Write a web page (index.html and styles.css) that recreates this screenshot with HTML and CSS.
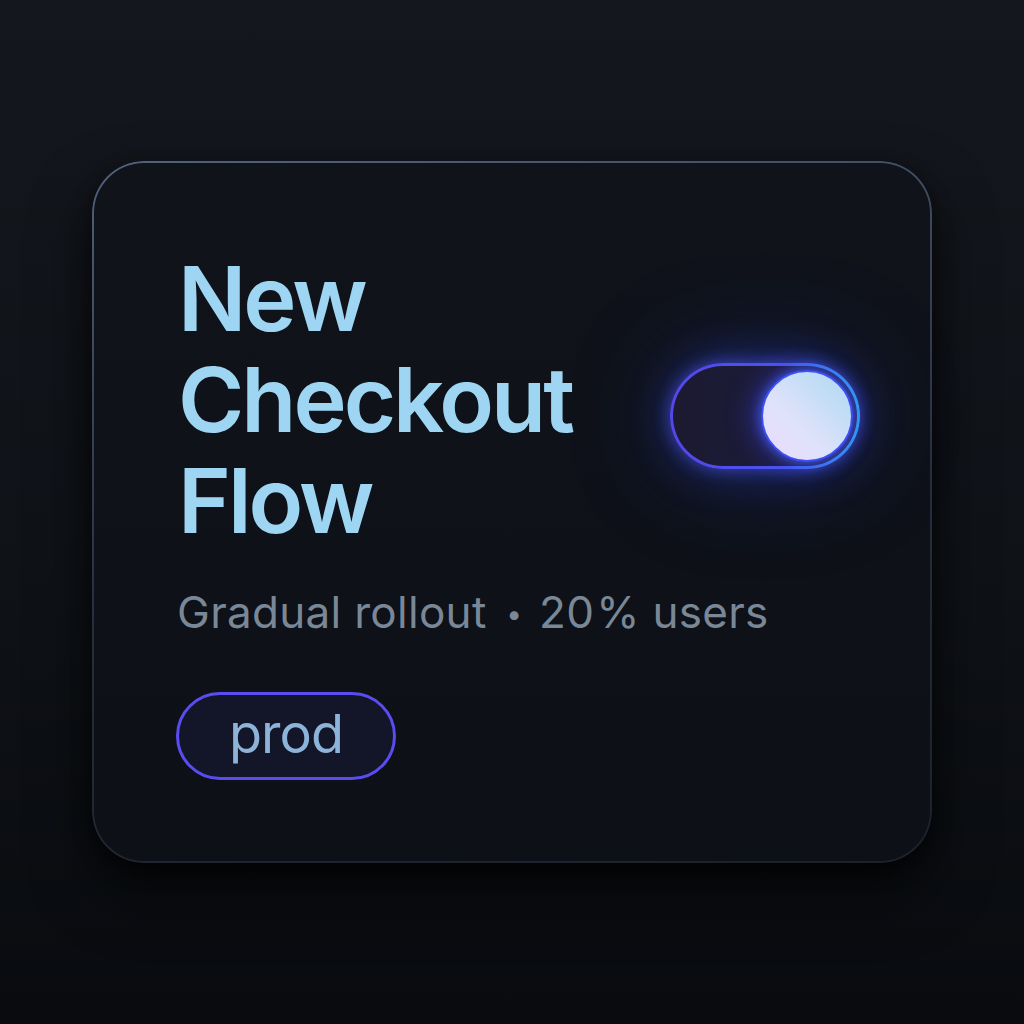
FILE: index.html
```html
<!DOCTYPE html>
<html>
<head>
<meta charset="utf-8">
<link rel="stylesheet" href="styles.css">
</head>
<body>
<div class="stage">
  <div class="card">
    <div class="top-row">
      <h1 class="title">New<br>Checkout<br>Flow</h1>
      <div class="toggle" role="switch" aria-checked="true">
        <div class="knob"></div>
      </div>
    </div>
    <p class="subtitle">Gradual rollout <span class="dot">•</span> 20<span class="pct">%</span> users</p>
    <span class="pill">prod</span>
  </div>
</div>
</body>
</html>
```
FILE: styles.css
```css
html, body {
  margin: 0;
  padding: 0;
}
body {
  width: 1024px;
  height: 1024px;
  background: linear-gradient(180deg, #14171d 0%, #0f1217 55%, #090b0f 100%);
  font-family: Inter, "Noto Sans", "Liberation Sans", sans-serif;
  overflow: hidden;
}
.stage {
  width: 1024px;
  height: 1024px;
  display: flex;
  align-items: center;
  justify-content: center;
}
.card {
  box-sizing: border-box;
  width: 840px;
  height: 702px;
  border-radius: 52px;
  background: linear-gradient(180deg, #10131a 0%, #0d1016 100%);
  border: 2px solid transparent;
  background-clip: padding-box;
  box-shadow:
    0 30px 60px rgba(0,0,0,0.6),
    0 8px 20px rgba(0,0,0,0.45);
  position: relative;
  padding: 85px 70px 0 84px;
  display: flex;
  flex-direction: column;
  align-items: flex-start;
}
.card::before {
  content: "";
  position: absolute;
  inset: -2px;
  border-radius: 52px;
  padding: 2px;
  background: linear-gradient(170deg, #51627e 0%, #3a475c 25%, #262e3c 55%, #1c212b 100%);
  -webkit-mask: linear-gradient(#000 0 0) content-box, linear-gradient(#000 0 0);
  -webkit-mask-composite: xor;
  mask-composite: exclude;
  pointer-events: none;
}
.top-row {
  width: 100%;
  display: flex;
  justify-content: space-between;
  align-items: flex-start;
}
.title {
  margin: 0;
  font-size: 90px;
  line-height: 101px;
  font-weight: 600;
  color: #9dd5f2;
  letter-spacing: -3px;
}
.toggle {
  box-sizing: border-box;
  margin-top: 115px;
  width: 190px;
  height: 106px;
  border-radius: 53px;
  border: 3px solid transparent;
  background:
    linear-gradient(90deg, #1b1a30 0%, #1d1b3a 55%, #25245e 100%) padding-box,
    linear-gradient(90deg, #5546ea 0%, #4a55f0 60%, #2fa6f4 100%) border-box;
  box-shadow:
    0 0 16px rgba(80, 90, 255, 0.6),
    0 0 45px rgba(60, 80, 240, 0.4),
    0 0 110px rgba(40, 70, 220, 0.3);
  display: flex;
  align-items: center;
  justify-content: flex-end;
  padding-right: 4px;
}
.knob {
  width: 92px;
  height: 92px;
  border-radius: 50%;
  box-sizing: border-box;
  border: 2px solid #3d4ff5;
  background: linear-gradient(45deg, #eadcfb 0%, #dfe2fa 40%, #c4def6 70%, #b4d6f4 100%);
  box-shadow: 0 0 12px rgba(70, 100, 255, 0.85), -8px 0 26px rgba(60, 70, 240, 0.5);
}
.subtitle {
  margin: 35px 0 0 -1px;
  font-size: 44px;
  line-height: 52px;
  color: #7a8797;
  font-weight: 400;
  letter-spacing: 0.3px;
}
.dot {
  display: inline-block;
  margin: 0 4px 0 7px;
  font-size: 28px;
  vertical-align: 4px;
}
.pct {
  margin-left: 2px;
}
.pill {
  margin-top: 52px;
  margin-left: -2px;
  box-sizing: border-box;
  width: 220px;
  height: 88px;
  border-radius: 44px;
  border: 3px solid #5a4cf0;
  background: #131628;
  color: #8db3d8;
  font-size: 54px;
  letter-spacing: -1px;
  display: flex;
  align-items: center;
  justify-content: center;
  padding-bottom: 6px;
}
```
